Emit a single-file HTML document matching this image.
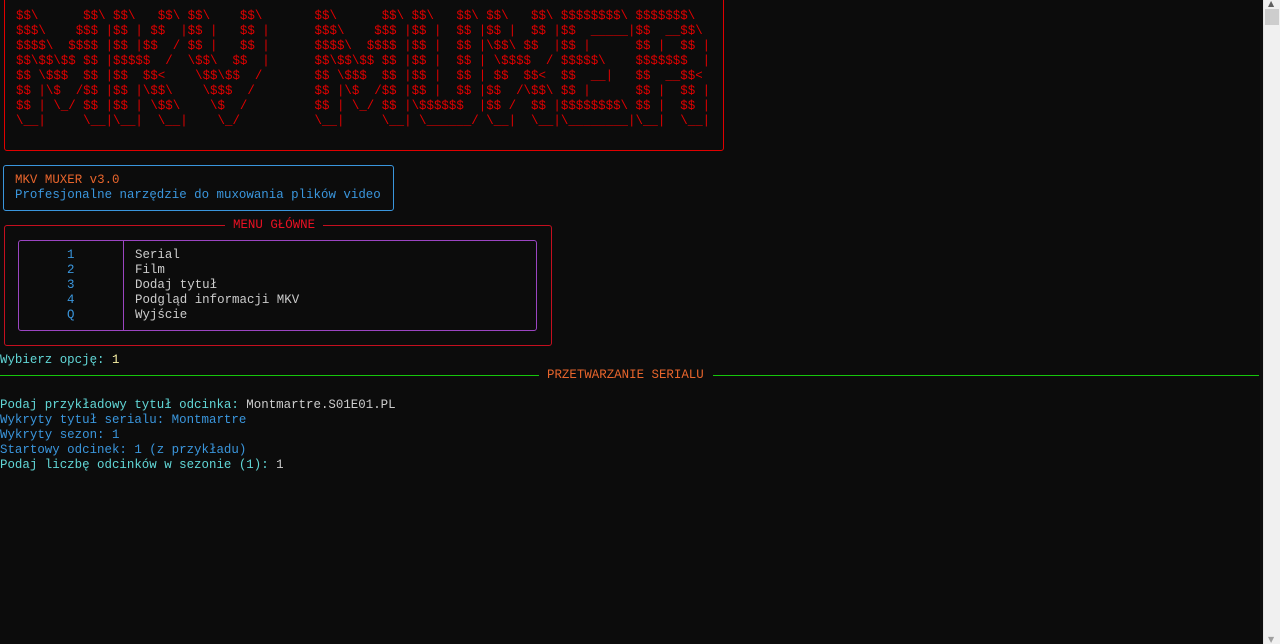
<!DOCTYPE html>
<html><head><meta charset="utf-8"><style>
*{margin:0;padding:0;box-sizing:border-box}
body{width:1280px;height:644px;background:#0c0c0c;overflow:hidden;position:relative;font-family:"Liberation Mono",monospace;font-size:12.45px;color:#cccccc}
.l{position:absolute;white-space:pre;line-height:15px;height:15px;margin-top:1px}
.box{position:absolute;border:1px solid;border-radius:3px}
pre{font-family:"Liberation Mono",monospace;font-size:12.45px;line-height:15px;color:#e00000;position:absolute;left:16px;top:9px}
.c{color:#61d6d6}.b{color:#3a96dd}.o{color:#e8652c}
</style></head><body>
<div class="box" style="left:4px;top:-5px;width:720px;height:156px;border-color:#e00000"></div>
<pre>$$\      $$\ $$\   $$\ $$\    $$\       $$\      $$\ $$\   $$\ $$\   $$\ $$$$$$$$\ $$$$$$$\  
$$$\    $$$ |$$ | $$  |$$ |   $$ |      $$$\    $$$ |$$ |  $$ |$$ |  $$ |$$  _____|$$  __$$\ 
$$$$\  $$$$ |$$ |$$  / $$ |   $$ |      $$$$\  $$$$ |$$ |  $$ |\$$\ $$  |$$ |      $$ |  $$ |
$$\$$\$$ $$ |$$$$$  /  \$$\  $$  |      $$\$$\$$ $$ |$$ |  $$ | \$$$$  / $$$$$\    $$$$$$$  |
$$ \$$$  $$ |$$  $$&lt;    \$$\$$  /       $$ \$$$  $$ |$$ |  $$ | $$  $$&lt;  $$  __|   $$  __$$&lt; 
$$ |\$  /$$ |$$ |\$$\    \$$$  /        $$ |\$  /$$ |$$ |  $$ |$$  /\$$\ $$ |      $$ |  $$ |
$$ | \_/ $$ |$$ | \$$\    \$  /         $$ | \_/ $$ |\$$$$$$  |$$ /  $$ |$$$$$$$$\ $$ |  $$ |
\__|     \__|\__|  \__|    \_/          \__|     \__| \______/ \__|  \__|\________|\__|  \__|</pre>

<div class="box" style="left:3px;top:165px;width:391px;height:46px;border-color:#3a96dd"></div>
<div class="l o" style="left:15px;top:172px">MKV MUXER v3.0</div>
<div class="l b" style="left:15px;top:187px">Profesjonalne narzędzie do muxowania plików video</div>

<div class="box" style="left:4px;top:225px;width:548px;height:121px;border-color:#c50f1f"></div>
<div class="l" style="left:225px;top:217px;color:#e81123;background:#0c0c0c;padding:0 8px">MENU GŁÓWNE</div>
<div class="box" style="left:18px;top:240px;width:519px;height:91px;border-color:#9b45c2"></div>
<div style="position:absolute;left:123px;top:241px;width:1px;height:89px;background:#9b45c2"></div>
<div class="l b" style="left:67px;top:247px">1</div>
<div class="l b" style="left:67px;top:262px">2</div>
<div class="l b" style="left:67px;top:277px">3</div>
<div class="l b" style="left:67px;top:292px">4</div>
<div class="l b" style="left:67px;top:307px">Q</div>
<div class="l" style="left:135px;top:247px">Serial</div>
<div class="l" style="left:135px;top:262px">Film</div>
<div class="l" style="left:135px;top:277px">Dodaj tytuł</div>
<div class="l" style="left:135px;top:292px">Podgląd informacji MKV</div>
<div class="l" style="left:135px;top:307px">Wyjście</div>

<div class="l" style="left:0;top:352px"><span class="c">Wybierz opcję:</span> <span style="color:#f9f1a5">1</span></div>
<div style="position:absolute;left:0;top:375px;width:539px;height:1px;background:#16c60c"></div>
<div class="l o" style="left:547px;top:367px">PRZETWARZANIE SERIALU</div>
<div style="position:absolute;left:713px;top:375px;width:546px;height:1px;background:#16c60c"></div>

<div class="l" style="left:0;top:397px"><span class="c">Podaj przykładowy tytuł odcinka:</span> Montmartre.S01E01.PL</div>
<div class="l b" style="left:0;top:412px">Wykryty tytuł serialu: Montmartre</div>
<div class="l b" style="left:0;top:427px">Wykryty sezon: 1</div>
<div class="l b" style="left:0;top:442px">Startowy odcinek: 1 (z przykładu)</div>
<div class="l" style="left:0;top:457px"><span class="c">Podaj liczbę odcinków w sezonie (1):</span> 1</div>

<div style="position:absolute;left:1263px;top:0;width:17px;height:644px;background:#f0f0f0;border-left:1px solid #e6e6e6"></div>
<div style="position:absolute;left:1268px;top:0;color:#606060;font-size:8px;line-height:8px;font-family:'DejaVu Sans',sans-serif">▲</div>
<div style="position:absolute;left:1265px;top:9px;width:14px;height:16px;background:#cdcdcd"></div>
<div style="position:absolute;left:1268px;top:636px;color:#a0a0a0;font-size:8px;line-height:8px;font-family:'DejaVu Sans',sans-serif">▼</div>
</body></html>
